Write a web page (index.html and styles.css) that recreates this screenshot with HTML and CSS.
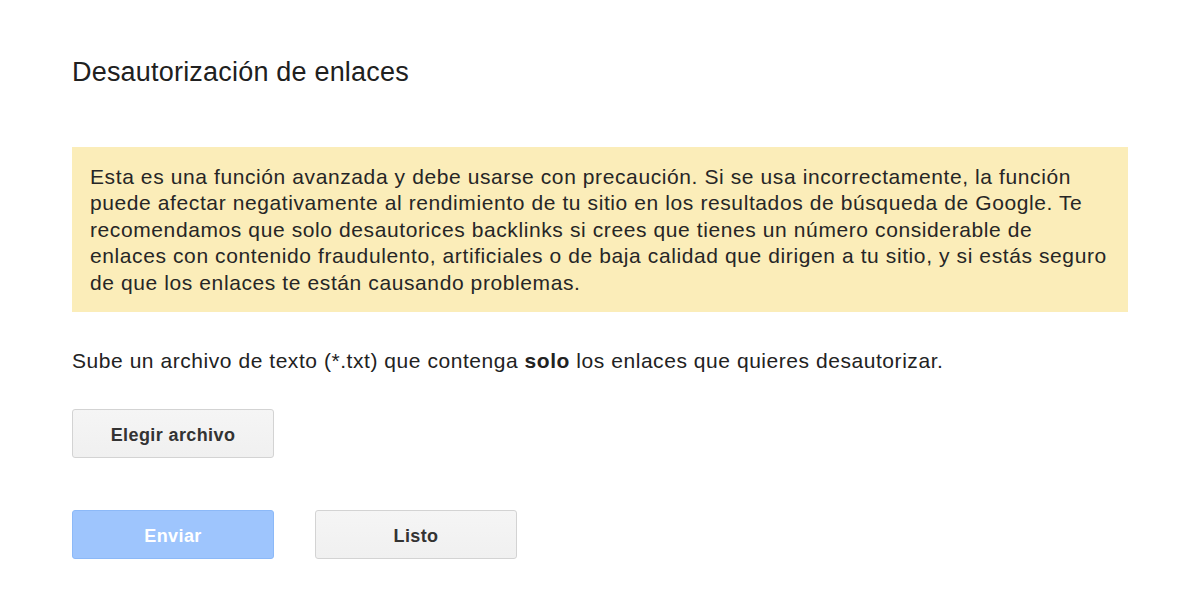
FILE: index.html
```html
<!DOCTYPE html>
<html lang="es">
<head>
<meta charset="utf-8">
<title>Desautorización de enlaces</title>
<link rel="stylesheet" href="styles.css">
</head>
<body>
<main class="page">
  <h1 class="title">Desautorización de enlaces</h1>
  <div class="warning">Esta es una función avanzada y debe usarse con precaución. Si se usa incorrectamente, la función puede afectar negativamente al rendimiento de tu sitio en los resultados de búsqueda de Google. Te recomendamos que solo desautorices backlinks si crees que tienes un número considerable de enlaces con contenido fraudulento, artificiales o de baja calidad que dirigen a tu sitio, y si estás seguro de que los enlaces te están causando problemas.</div>
  <p class="intro">Sube un archivo de texto (*.txt) que contenga <b>solo</b> los enlaces que quieres desautorizar.</p>
  <div class="row row-file">
    <button class="btn">Elegir archivo</button>
  </div>
  <div class="row row-actions">
    <button class="btn btn-primary">Enviar</button>
    <button class="btn">Listo</button>
  </div>
</main>
</body>
</html>
```
FILE: styles.css
```css
html, body {
  margin: 0;
  padding: 0;
  background: #ffffff;
}
body {
  font-family: "Liberation Sans", Arial, sans-serif;
  color: #222222;
}
.page {
  padding: 0 72px;
  display: flex;
  flex-direction: column;
}
.title {
  margin: 56px 0 0;
  font-size: 27px;
  letter-spacing: 0.2px;
  font-weight: normal;
  line-height: 32px;
  color: #202020;
}
.warning {
  margin-top: 59px;
  background: #fbedb9;
  padding: 17px 18px 16px;
  font-size: 21px;
  letter-spacing: 0.6px;
  line-height: 26.4px;
  color: #262626;
}
.intro {
  margin: 36px 0 0;
  font-size: 21px;
  letter-spacing: 0.55px;
  line-height: 26px;
}
.intro b {
  font-weight: bold;
}
.row {
  display: flex;
  gap: 41px;
}
.row-file {
  margin-top: 35px;
}
.row-actions {
  margin-top: 52px;
}
.btn {
  width: 202px;
  height: 49px;
  box-sizing: border-box;
  border: 1px solid #d3d3d3;
  border-radius: 3px;
  background: linear-gradient(#f5f5f5, #f0f0f0);
  font-family: "Liberation Sans", Arial, sans-serif;
  font-size: 18px;
  letter-spacing: 0.4px;
  font-weight: bold;
  color: #333333;
  padding: 3px 0 0;
}
.btn-primary {
  background: #9ec5fd;
  border-color: #8cb9f8;
  color: #ffffff;
}
```
